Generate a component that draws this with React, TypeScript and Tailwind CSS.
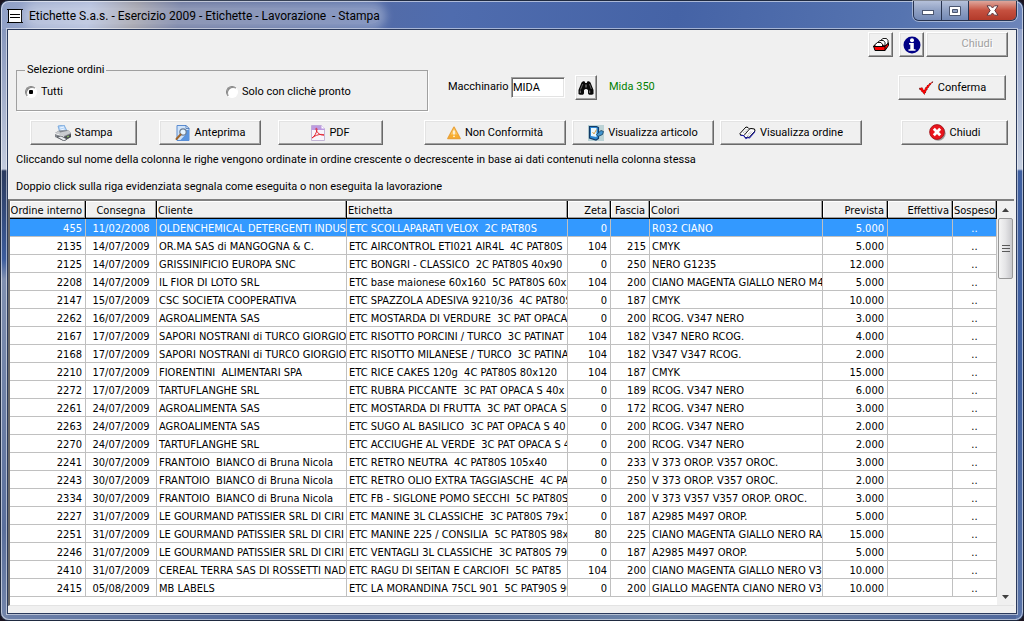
import React from 'react';

type Row = [string, string, string, string, string, string, string, string];

const rows: Row[] = [
  ['455', '11/02/2008', 'OLDENCHEMICAL DETERGENTI INDUST', 'ETC SCOLLAPARATI VELOX  2C PAT80S', '0', '', 'R032 CIANO', '5.000'],
  ['2135', '14/07/2009', 'OR.MA SAS di MANGOGNA & C.', 'ETC AIRCONTROL ETI021 AIR4L  4C PAT80S', '104', '215', 'CMYK', '5.000'],
  ['2125', '14/07/2009', 'GRISSINIFICIO EUROPA SNC', 'ETC BONGRI - CLASSICO  2C PAT80S 40x90', '0', '250', 'NERO G1235', '12.000'],
  ['2208', '14/07/2009', 'IL FIOR DI LOTO SRL', 'ETC base maionese 60x160  5C PAT80S 60x1', '104', '200', 'CIANO MAGENTA GIALLO NERO M4', '5.000'],
  ['2147', '15/07/2009', 'CSC SOCIETA COOPERATIVA', 'ETC SPAZZOLA ADESIVA 9210/36  4C PAT80S', '0', '187', 'CMYK', '10.000'],
  ['2262', '16/07/2009', 'AGROALIMENTA SAS', 'ETC MOSTARDA DI VERDURE  3C PAT OPACA', '0', '200', 'RCOG. V347 NERO', '3.000'],
  ['2167', '17/07/2009', 'SAPORI NOSTRANI di TURCO GIORGIO', 'ETC RISOTTO PORCINI / TURCO  3C PATINAT', '104', '182', 'V347 NERO RCOG.', '4.000'],
  ['2168', '17/07/2009', 'SAPORI NOSTRANI di TURCO GIORGIO', 'ETC RISOTTO MILANESE / TURCO  3C PATINA', '104', '182', 'V347 V347 RCOG.', '2.000'],
  ['2210', '17/07/2009', 'FIORENTINI  ALIMENTARI SPA', 'ETC RICE CAKES 120g  4C PAT80S 80x120', '104', '187', 'CMYK', '15.000'],
  ['2272', '17/07/2009', 'TARTUFLANGHE SRL', 'ETC RUBRA PICCANTE  3C PAT OPACA S 40x', '0', '189', 'RCOG. V347 NERO', '6.000'],
  ['2261', '24/07/2009', 'AGROALIMENTA SAS', 'ETC MOSTARDA DI FRUTTA  3C PAT OPACA S', '0', '172', 'RCOG. V347 NERO', '3.000'],
  ['2263', '24/07/2009', 'AGROALIMENTA SAS', 'ETC SUGO AL BASILICO  3C PAT OPACA S 40', '0', '200', 'RCOG. V347 NERO', '2.000'],
  ['2270', '24/07/2009', 'TARTUFLANGHE SRL', 'ETC ACCIUGHE AL VERDE  3C PAT OPACA S 4', '0', '200', 'RCOG. V347 NERO', '2.000'],
  ['2241', '30/07/2009', 'FRANTOIO  BIANCO di Bruna Nicola', 'ETC RETRO NEUTRA  4C PAT80S 105x40', '0', '233', 'V 373 OROP. V357 OROC.', '3.000'],
  ['2243', '30/07/2009', 'FRANTOIO  BIANCO di Bruna Nicola', 'ETC RETRO OLIO EXTRA TAGGIASCHE  4C PA', '0', '250', 'V 373 OROP. V357 OROC.', '2.000'],
  ['2334', '30/07/2009', 'FRANTOIO  BIANCO di Bruna Nicola', 'ETC FB - SIGLONE POMO SECCHI  5C PAT80S', '0', '200', 'V 373 V357 V357 OROP. OROC.', '3.000'],
  ['2227', '31/07/2009', 'LE GOURMAND PATISSIER SRL DI CIRI', 'ETC MANINE 3L CLASSICHE  3C PAT80S 79x1', '0', '187', 'A2985 M497 OROP.', '5.000'],
  ['2251', '31/07/2009', 'LE GOURMAND PATISSIER SRL DI CIRI', 'ETC MANINE 225 / CONSILIA  5C PAT80S 98x', '80', '225', 'CIANO MAGENTA GIALLO NERO RA', '15.000'],
  ['2246', '31/07/2009', 'LE GOURMAND PATISSIER SRL DI CIRI', 'ETC VENTAGLI 3L CLASSICHE  3C PAT80S 79x', '0', '187', 'A2985 M497 OROP.', '5.000'],
  ['2410', '31/07/2009', 'CEREAL TERRA SAS DI ROSSETTI NAD', 'ETC RAGU DI SEITAN E CARCIOFI  5C PAT85', '104', '200', 'CIANO MAGENTA GIALLO NERO V3', '10.000'],
  ['2415', '05/08/2009', 'MB LABELS', 'ETC LA MORANDINA 75CL 901  5C PAT90S 90', '0', '200', 'GIALLO MAGENTA CIANO NERO V3', '10.000'],
];

const columns = [
  { label: 'Ordine interno', align: 'text-right pr-[3px]' },
  { label: 'Consegna', align: 'text-center' },
  { label: 'Cliente', align: 'text-left pl-px' },
  { label: 'Etichetta', align: 'text-left pl-px' },
  { label: 'Zeta', align: 'text-right pr-[3px]' },
  { label: 'Fascia', align: 'text-center' },
  { label: 'Colori', align: 'text-left pl-px' },
  { label: 'Prevista', align: 'text-right pr-[3px]' },
  { label: 'Effettiva', align: 'text-right pr-[3px]' },
  { label: 'Sospeso', align: 'text-center' },
];

const cellAlign = [
  'text-right pr-[3px]',
  'text-center',
  'text-left pl-0.5',
  'text-left pl-0.5',
  'text-right pr-[3px]',
  'text-right pr-[3px]',
  'text-left pl-0.5',
  'text-right pr-[3px]',
  'text-right pr-[3px]',
  'text-center',
];

const raised =
  'flex h-[25px] shrink-0 items-center justify-center whitespace-nowrap border border-t-white border-l-white border-r-[#696969] border-b-[#696969] bg-[#f0f0f0] shadow-[inset_-1px_-1px_0_#a0a0a0,inset_1px_1px_0_#e3e3e3]';

function PrinterIcon() {
  return (
    <svg width="16" height="16" viewBox="0 0 16 16" aria-hidden="true">
      <path d="M3 1l6-1 3 6-7 2z" fill="#b4d4f7" stroke="#6c9fd8" strokeWidth=".8" />
      <path d="M5 3l4-1M5.500 5l4-1" stroke="#fff" strokeWidth=".8" />
      <path d="M0 8l4-2.500 9-.5 3 3v4l-7 4L0 12z" fill="#82868c" />
      <path d="M0 8l4-2 1 1.500 7-1.500 1-1 3 3-7 3z" fill="#c9ccd0" />
      <path d="M0 8l9 3v1L0 9z" fill="#fff" />
      <path d="M9 12l7-3v3l-7 4z" fill="#4b4f55" />
      <path d="M2 12l4-1 6 3-3 2z" fill="#e8ebef" stroke="#44474c" strokeWidth=".7" />
      <path d="M12 12l2-1" stroke="#8fd060" />
    </svg>
  );
}

function PreviewIcon() {
  return (
    <svg width="16" height="16" viewBox="0 0 16 16" aria-hidden="true">
      <path d="M2 .5h9l3 3v12H2z" fill="#cfe3fa" stroke="#5b8cd0" />
      <path d="M11 5h3v10.500H5L11 9z" fill="#5a94df" />
      <path d="M11 .5v3h3z" fill="#fff" stroke="#3e6fb5" strokeWidth=".8" />
      <circle cx="8" cy="7" r="3.200" fill="#e6f4ff" stroke="#6b7d94" strokeWidth="1.200" />
      <path d="M5.600 9.500L1.500 14" stroke="#a0662c" strokeWidth="2" strokeLinecap="round" />
    </svg>
  );
}

function PdfIcon() {
  return (
    <svg width="14" height="16" viewBox="0 0 14 16" aria-hidden="true">
      <path d="M.5.5h10l3 3v12H.5z" fill="#f8f4fb" stroke="#c3b6d6" />
      <path d="M.5.5h10l3 3v1.500H.5z" fill="#bd9be0" />
      <path d="M10.500.5v3h3z" fill="#fff" />
      <path d="M1 13c2.500-1.500 4.500-5 5-8.500.1-1.700-1.400-1.600-1-.2C6 7.800 9 10.600 13 10c-3-1.500-8.500 0-12 3z" fill="none" stroke="#e22330" />
    </svg>
  );
}

function WarningIcon() {
  return (
    <svg width="14" height="14" viewBox="0 0 14 14" aria-hidden="true">
      <path d="M7 1.200L13.200 12.500H.8z" fill="#f9ad2c" stroke="#e9a23a" strokeWidth="1.400" strokeLinejoin="round" />
      <path d="M7 2L10.500 8.500h-7z" fill="#fbc765" />
      <path d="M7 4.500v4" stroke="#fff" strokeWidth="1.400" />
      <rect x="6.300" y="9.700" width="1.400" height="1.400" fill="#fff" />
    </svg>
  );
}

function ArticleIcon() {
  return (
    <svg width="16" height="16" viewBox="0 0 16 16" aria-hidden="true">
      <rect width="16" height="16" fill="#bcd3d6" />
      <path d="M1.500 1.500h7L10.500 2.500v11L8 15l-6.500-2z" fill="#2b87d3" stroke="#123b68" strokeWidth="1.200" />
      <path d="M3 3h5.500v9L3 11z" fill="#e9f5fc" />
      <path d="M4.500 7l1.500 2L8.500 4.500" fill="none" stroke="#d9a450" />
      <path d="M8.500 9.500l4.500-4 2.500 1-1 3-4.500 2z" fill="#3f94d0" stroke="#153e60" strokeWidth=".8" />
    </svg>
  );
}

function BookIcon() {
  return (
    <svg width="17" height="14" viewBox="0 0 17 14" aria-hidden="true">
      <path d="M1 7.500L7 1l2 .5L10.500 3l1.500-.5 3.500.5.500 2L10 11.500 8.500 11 7 12 4.500 9.500 1.500 9z" fill="#fff" stroke="#000" />
      <path d="M10.500 3L5 9.500" stroke="#000" strokeWidth=".9" />
      <path d="M4 7l3.500-4M5.500 7.500l3-4M8 9.500L12 5M9.500 9.500L13.500 5" stroke="#777" strokeWidth=".7" strokeDasharray="1 1" />
      <path d="M1.500 9.500h3L7 12.500 8.500 11.500l2 .5L16 5.500" fill="none" stroke="#1a1aa8" strokeWidth="1.100" />
    </svg>
  );
}

function CloseCircleIcon() {
  return (
    <svg width="17" height="17" viewBox="0 0 17 17" aria-hidden="true">
      <circle cx="9.200" cy="9.200" r="7.500" fill="#9b9b9b" />
      <circle cx="8" cy="8" r="7.400" fill="#e9141c" stroke="#9e1016" strokeWidth=".8" />
      <path d="M4.800 4.800l6.400 6.400M11.200 4.800l-6.400 6.400" stroke="#fff" strokeWidth="2.800" />
    </svg>
  );
}

function CheckIcon() {
  return (
    <svg width="16" height="14" viewBox="0 0 16 14" aria-hidden="true">
      <path d="M1 7.500l3-1 2 3C8 5.500 11 2 15.500.5 12 3.500 9 8 6.500 13.500z" fill="#f00" stroke="#4a0808" strokeWidth=".7" strokeDasharray="1.500 1.500" />
    </svg>
  );
}

function BinocularsIcon() {
  return (
    <svg width="16" height="14" viewBox="0 0 16 14" aria-hidden="true">
      <path d="M3.500 1.500L5 .3h1.500L7.300 2h1.400L9.500.3H11l1.500 1.200L15.500 9v4l-1.500.7h-3L10 12.500V9L8.500 8h-1L6 9v3.500l-1 1.200H2L.5 13V9z" fill="#080808" />
      <path d="M4.800 3L2.500 8.500M11.500 3l1.800 5" stroke="#6d6d6d" strokeWidth=".9" />
      <path d="M2.300 9.500v2.500M11.700 9.500v2.500" stroke="#888" strokeWidth=".9" />
      <path d="M8 3.500v3" stroke="#999" />
    </svg>
  );
}

function CardFileIcon() {
  return (
    <svg width="16" height="13" viewBox="0 0 16 13" aria-hidden="true">
      <path d="M.5 8L4 5.500h11.500v2L12 12.500H2z" fill="#f00" stroke="#000" />
      <path d="M7.500 2.500L10 .5h3.500l1.500 2v3L12.500 8z" fill="#fff" stroke="#000" strokeWidth=".9" />
      <path d="M4.500 4.500L7 2.500h3.500l1.500 2V8z" fill="#fff" stroke="#000" strokeWidth=".9" />
      <path d="M2 8V6.500l2.500-2H8l1.500 2V8.500H2z" fill="#fff" stroke="#000" strokeWidth=".9" />
      <path d="M.5 8.500H12l3.500-4M12 8.500v4" fill="none" stroke="#000" strokeWidth=".9" />
    </svg>
  );
}

function InfoIcon() {
  return (
    <svg width="18" height="18" viewBox="0 0 18 18" aria-hidden="true">
      <circle cx="9" cy="9" r="8.500" fill="#000086" />
      <circle cx="9" cy="4.200" r="2" fill="#fff" />
      <path d="M6 7h4.800v6.200H12.500v1.600H5.500v-1.600h1.800V8.600H6z" fill="#fff" />
    </svg>
  );
}

function ToolButton({ icon, label, className }: { icon: React.ReactNode; label: string; className: string }) {
  return (
    <button type="button" className={`${raised} gap-1 ${className}`}>
      {icon}
      <span className="pt-px">{label}</span>
    </button>
  );
}

function TitleBar() {
  return (
    <header className="flex h-7 items-start justify-between">
      <div className="flex h-7 items-center gap-1.5 pt-0.5">
        <svg width="16" height="14" viewBox="0 0 16 14" aria-hidden="true">
          <rect x="1" y="1" width="14" height="12" fill="#fff" />
          <path d="M0 .5h16M0 13.500h16M1.500 0v14M14.500 0v14" stroke="#000" />
          <path d="M3 5.500h10M3 8.500h10" stroke="#000" />
        </svg>
        <h1 className="whitespace-pre rounded-full bg-white/30 text-[12px] leading-4 shadow-[0_0_8px_6px_rgba(255,255,255,0.3)]">
          Etichette S.a.s. - Esercizio 2009 - Etichette - Lavorazione  - Stampa
        </h1>
      </div>
      <div className="flex h-5 overflow-hidden rounded-b-md border border-t-0 border-[#27334f] shadow-[0_0_0_1px_rgba(255,255,255,0.45)]">
        <button type="button" aria-label="Riduci a icona" className="flex w-7 items-center justify-center border-r border-[#27334f] bg-linear-to-b from-[#b5c1da] via-[#8fa0c3] to-[#7389b5]">
          <svg width="12" height="12" viewBox="0 0 12 12"><rect x=".5" y="5.500" width="11" height="4" fill="#fff" stroke="#4b5670" /></svg>
        </button>
        <button type="button" aria-label="Ingrandisci" className="flex w-[27px] items-center justify-center border-r border-[#27334f] bg-linear-to-b from-[#b5c1da] via-[#8fa0c3] to-[#7389b5]">
          <svg width="12" height="10" viewBox="0 0 12 10"><path d="M.5.5h11v9H.5z" fill="#fff" stroke="#4b5670" /><path d="M3.500 3.500h5v3h-5z" fill="#8fa0c3" stroke="#4b5670" /></svg>
        </button>
        <button type="button" aria-label="Chiudi finestra" className="flex w-[47px] items-center justify-center bg-linear-to-b from-[#dda69c] via-[#c5503f] to-[#b33a2a]">
          <svg width="13" height="11" viewBox="0 0 13 11"><path d="M1 .8h3.500l2 2.200 2-2.200H12L8.800 5.500l3.200 4.700H8.500l-2-2.200-2 2.200H1l3.200-4.700z" fill="#fff" stroke="#5c3a42" /></svg>
        </button>
      </div>
    </header>
  );
}

function Radio({ label, checked }: { label: string; checked?: boolean }) {
  return (
    <label className="flex items-center gap-1">
      <input
        type="radio"
        name="selezione"
        defaultChecked={checked}
        className="size-3 appearance-none rounded-full border border-t-[#808080] border-l-[#808080] border-r-white border-b-white bg-white bg-center bg-no-repeat shadow-[inset_1px_1px_0_#8a8a8a] checked:bg-[radial-gradient(circle,#000_0_2px,transparent_2.5px)]"
      />
      {label}
    </label>
  );
}

function OrdersTable() {
  return (
    <div className="mr-0.5 flex min-h-0 grow border-t-2 border-l-2 border-b border-t-[#808080] border-l-[#696969] border-b-[#e3e3e3] bg-white">
      <div className="min-w-0 grow pb-2">
        <table className="w-full table-fixed border-separate border-spacing-0 font-['DejaVu_Sans_Condensed','DejaVu_Sans',sans-serif]">
          <colgroup>
            <col className="w-[76px]" />
            <col className="w-[71px]" />
            <col className="w-[190px]" />
            <col />
            <col className="w-[43px]" />
            <col className="w-[39px]" />
            <col className="w-[173px]" />
            <col className="w-[65px]" />
            <col className="w-[65px]" />
            <col className="w-[44px]" />
          </colgroup>
          <thead>
            <tr>
              {columns.map((c) => (
                <th key={c.label} scope="col" className={`h-[18px] overflow-hidden whitespace-nowrap border-r border-b border-black bg-[#f0f0f0] pt-0.5 font-normal leading-[15px] shadow-[inset_-1px_-1px_0_#a0a0a0,inset_1px_1px_0_#fff] ${c.align}`}>
                  {c.label}
                </th>
              ))}
            </tr>
          </thead>
          <tbody>
            {rows.map((r, i) => (
              <tr key={r[0]} className={i === 0 ? 'bg-[#3399ff] text-white' : ''}>
                {[...r, '', '..'].map((v, j) => (
                  <td key={j} className={`h-[18px] overflow-hidden whitespace-pre border-r border-b border-[#c0c0c0] pt-0.5 leading-[15px] ${cellAlign[j]}`}>
                    {v}
                  </td>
                ))}
              </tr>
            ))}
          </tbody>
        </table>
      </div>
      <div className="flex w-[17px] shrink-0 flex-col bg-[#f0f0f0]">
        <button type="button" aria-label="Scorri su" className="flex h-[17px] items-center justify-center">
          <svg width="7" height="4" viewBox="0 0 7 4"><path d="M0 4l3.500-4L7 4z" fill="#404040" /></svg>
        </button>
        <div className="mx-px flex h-[61px] items-center justify-center rounded-xs border border-[#979797] bg-linear-to-r from-[#f5f5f5] via-[#e4e4e6] to-[#c8c8cc]">
          <svg width="8" height="9" viewBox="0 0 8 9" aria-hidden="true"><path d="M0 1.500h8M0 4.500h8M0 7.500h8" stroke="#5a5a5a" /></svg>
        </div>
        <div className="grow" />
        <button type="button" aria-label="Scorri giù" className="flex h-[17px] items-center justify-center">
          <svg width="7" height="4" viewBox="0 0 7 4"><path d="M0 0l3.500 4L7 0z" fill="#404040" /></svg>
        </button>
      </div>
    </div>
  );
}

export default function App() {
  return (
    <div className="flex h-screen flex-col bg-[#1a1420] font-[Roboto,sans-serif] text-[11px] text-black">
      <div className="flex min-h-0 grow flex-col rounded-lg border border-[#1f2a40] bg-[linear-gradient(100deg,#8f9fc6_0%,#a7b4d6_8%,#8f8f9c_12%,#5d6a96_16%,#4f6cae_40%,#4563a6_60%,#5674b0_80%,#8194c2_100%)]">
        <div className="flex min-h-0 grow flex-col rounded-lg bg-[linear-gradient(#8797bd_0,#c3cbdd_140px,#2c3b5f_142px,#3c5c9c_230px,#8090b0_250px,#5a6f9c_500px,#7385aa_100%),linear-gradient(#93a3ca_0,#c3cddf_140px,#3f5fa0_142px,#3f5fa0_350px,#5a74a8_100%),linear-gradient(90deg,#6d80a8,#4a6296_35%,#6f86a8_65%,#50689c)] bg-[size:7px_calc(100%-28px),7px_calc(100%-28px),100%_7px] bg-[position:0_28px,100%_28px,0_100%] bg-no-repeat px-1.5 pb-1.5 shadow-[inset_0_0_0_1px_rgba(255,255,255,0.55)]">
          <TitleBar />
          <main className="flex min-h-0 grow flex-col border border-[#2b3a5c] bg-[#f0f0f0] pb-[7px] shadow-[0_0_0_1px_rgba(255,255,255,0.5)]">
            <div className="flex h-8 items-start justify-end pr-2 pt-0.5">
              <button type="button" aria-label="Schedario" className={`${raised} mr-1.5 w-[25px]`}><CardFileIcon /></button>
              <button type="button" aria-label="Informazioni" className={`${raised} mr-0.5 w-[25px]`}><InfoIcon /></button>
              <button type="button" disabled className={`${raised} w-[82px] pl-5 text-[#a0a0a0] [text-shadow:1px_1px_0_#fff]`}>Chiudi</button>
            </div>

            <div className="flex items-start pl-2 pr-2.5">
              <fieldset className="h-[49px] w-[412px] border border-[#a0a0a0] px-2 shadow-[1px_1px_0_#fff]">
                <legend className="px-0.5 leading-4">Selezione ordini</legend>
                <div className="flex pt-1.5 leading-4">
                  <div className="w-[201px]"><Radio label="Tutti" checked /></div>
                  <Radio label="Solo con clichè pronto" />
                </div>
              </fieldset>
              <div className="flex h-[51px] grow items-center pl-5">
                <label htmlFor="macchinario" className="w-[63px]">Macchinario</label>
                <input
                  id="macchinario"
                  defaultValue="MIDA"
                  className="h-[21px] w-[54px] border border-t-[#a0a0a0] border-l-[#a0a0a0] border-r-white border-b-white bg-white px-px shadow-[inset_1px_1px_0_#696969,inset_-1px_-1px_0_#e3e3e3] outline-none"
                />
                <button type="button" aria-label="Cerca macchinario" className={`${raised} ml-2.5 w-[22px]`}><BinocularsIcon /></button>
                <output className="pl-3 text-[#008000]">Mida 350</output>
                <ToolButton icon={<CheckIcon />} label="Conferma" className="ml-auto w-[108px]" />
              </div>
            </div>

            <div className="flex pl-[22px] pr-2 pt-[7px]">
              <ToolButton icon={<PrinterIcon />} label="Stampa" className="w-[107px]" />
              <ToolButton icon={<PreviewIcon />} label="Anteprima" className="ml-[22px] w-[102px]" />
              <ToolButton icon={<PdfIcon />} label="PDF" className="ml-[17px] w-[105px]" />
              <ToolButton icon={<WarningIcon />} label="Non Conformità" className="ml-[41px] w-[142px]" />
              <ToolButton icon={<ArticleIcon />} label="Visualizza articolo" className="ml-1.5 w-[142px]" />
              <ToolButton icon={<BookIcon />} label="Visualizza ordine" className="ml-1.5 w-[142px]" />
              <ToolButton icon={<CloseCircleIcon />} label="Chiudi" className="ml-auto w-[107px]" />
            </div>

            <p className="pl-2 pt-[7px] leading-4">Cliccando sul nome della colonna le righe vengono ordinate in ordine crescente o decrescente in base ai dati contenuti nella colonna stessa</p>
            <p className="pb-1 pl-2 pt-[11px] leading-4">Doppio click sulla riga evidenziata segnala come eseguita o non eseguita la lavorazione</p>

            <OrdersTable />
          </main>
        </div>
      </div>
    </div>
  );
}
